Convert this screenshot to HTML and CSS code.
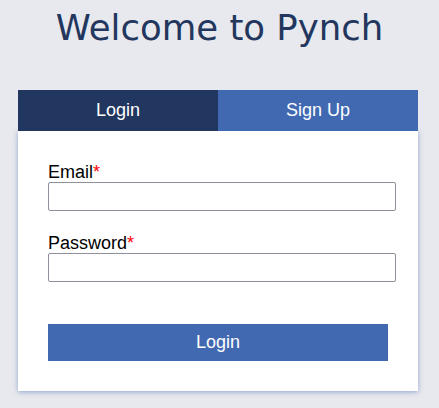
FILE: index.html
```html
<!DOCTYPE html>
<html lang="en">
<head>
<meta charset="utf-8">
<title>Welcome to Pynch</title>
<link rel="stylesheet" href="styles.css">
</head>
<body>
  <h1 class="title">Welcome to Pynch</h1>
  <div class="panel">
    <div class="tabs">
      <div class="tab tab-active">Login</div>
      <div class="tab">Sign Up</div>
    </div>
    <div class="card">
      <label class="field-label" for="email">Email<span class="req">*</span></label>
      <input class="field-input" id="email" type="email">
      <label class="field-label field-gap" for="password">Password<span class="req">*</span></label>
      <input class="field-input" id="password" type="password">
      <button class="submit" type="button">Login</button>
    </div>
  </div>
</body>
</html>
```
FILE: styles.css
```css
html, body {
  margin: 0;
  padding: 0;
  background: #e8e9ee;
}
body {
  font-family: "Liberation Sans", Arial, sans-serif;
  width: 439px;
  height: 408px;
  overflow: hidden;
}
.title {
  margin: 7px 0 0 0;
  font-family: "DejaVu Sans", sans-serif;
  font-weight: normal;
  font-size: 35.5px;
  line-height: 42px;
  color: #22365e;
  text-align: center;
}
.panel {
  margin: 41px 0 0 18px;
  width: 400px;
}
.tabs {
  display: flex;
  height: 41px;
}
.tab {
  flex: 1;
  background: #4169b2;
  color: #ffffff;
  font-size: 18px;
  line-height: 41px;
  text-align: center;
}
.tab-active {
  background: #223760;
}
.card {
  display: block;
  height: 260px;
  box-sizing: border-box;
  background: #ffffff;
  padding: 31px 22px 30px 30px;
  box-shadow: 0 1px 5px rgba(65, 105, 178, 0.55);
}
.field-label {
  display: block;
  font-size: 18px;
  line-height: 20px;
  color: #000000;
}
.field-gap {
  margin-top: 22px;
}
.req {
  color: #ff0000;
}
.field-input {
  display: block;
  box-sizing: border-box;
  width: 348px;
  height: 29px;
  margin: 0;
  border: 1px solid #8f8f9d;
  border-radius: 2px;
  background: #ffffff;
  font-size: 16px;
}
.submit {
  display: block;
  margin: 42px 0 0 0;
  width: 340px;
  height: 37px;
  border: none;
  background: #4169b2;
  color: #ffffff;
  font-family: "Liberation Sans", Arial, sans-serif;
  font-size: 18px;
  line-height: 37px;
  padding: 0;
}
```
